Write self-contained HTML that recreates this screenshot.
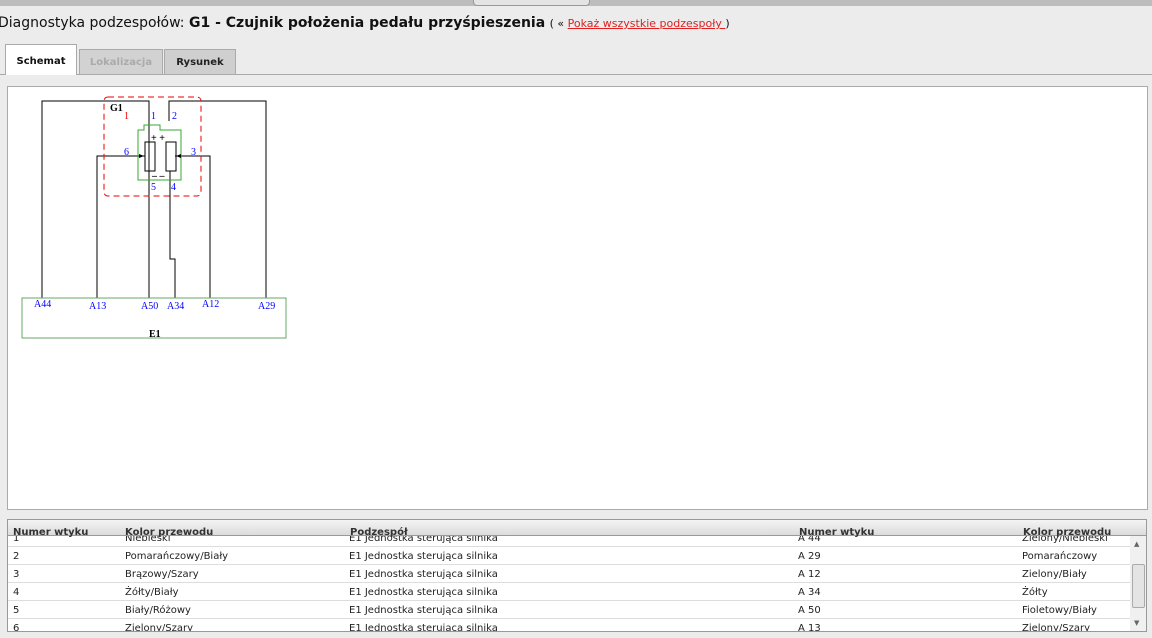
<!DOCTYPE html>
<html><head><meta charset="utf-8"><style>
body{margin:0;width:1152px;height:638px;background:#ececec;font-family:"DejaVu Sans","Liberation Sans",sans-serif;position:relative;overflow:hidden}
.top{position:absolute;left:0;top:0;width:1152px;height:6px;background:#bdbdbd}
.top .b{position:absolute;left:473px;top:-6px;width:115px;height:10px;border:1px solid #999;border-radius:4px;background:#e4e4e4}
h1{position:absolute;left:-2px;top:15px;margin:0;font-size:14px;font-weight:normal;color:#111;white-space:nowrap}
h1 b{font-weight:bold}
h1 .s{font-size:11px}
h1 a{color:#e02020;text-decoration:underline;font-size:11px}
.tab{position:absolute;top:49px;height:24px;line-height:25px;font-size:10px;font-weight:bold;text-align:center;border:1px solid #aaa;border-bottom:none}
.box{position:absolute;left:7px;top:86px;width:1139px;height:422px;background:#fff;border:1px solid #aaa}
.tbl{position:absolute;left:7px;top:519px;width:1138px;height:111px;border:1px solid #999;background:#fff;overflow:hidden;font-size:10px;color:#222}
.hd{position:absolute;left:0;top:0;width:1138px;height:15px;background:linear-gradient(#f4f4f4,#dcdcdc);border-bottom:1px solid #999;font-weight:bold;color:#333;z-index:2}
.hd span,.r span{position:absolute;white-space:nowrap}
.r{position:absolute;left:0;width:1122px;height:17px;border-bottom:1px solid #ddd}
.r span{top:4px}
.sb{position:absolute;right:0;top:16px;width:16px;height:95px;background:#f0f0f0}
.th{position:absolute;left:2px;top:28px;width:11px;height:42px;background:#e4e4e4;border:1px solid #aaa;border-radius:2px}
</style></head><body>
<div class="top"><div class="b"></div></div>
<h1>Diagnostyka podzespołów: <b>G1 - Czujnik położenia pedału przyśpieszenia</b> <span class="s">( « <a>Pokaż wszystkie podzespoły </a>)</span></h1>
<div class="tab" style="left:5px;width:70px;top:44px;height:30px;line-height:34px;background:#fff;color:#111;z-index:2">Schemat</div>
<div class="tab" style="left:79px;width:82px;background:#d2d2d2;color:#aaa">Lokalizacja</div>
<div class="tab" style="left:164px;width:70px;background:#cfcfcf;color:#222">Rysunek</div>
<div style="position:absolute;left:0;top:74px;width:1152px;height:1px;background:#aaa"></div>
<div class="box">
<svg width="1139" height="422" style="position:absolute;left:-8px;top:-87px" viewBox="0 0 1139 422">
<g fill="none" stroke="#000" stroke-width="1">
<path d="M42 298V101H149V298M169 121V101H266V298M97 298V156H145M210 298V156H175M170 171V259H175V298"/>
<rect x="145" y="142" width="10" height="29"/><rect x="166" y="142" width="10" height="29"/>
<rect x="104" y="97" width="97" height="99" rx="4" stroke="#e00" stroke-dasharray="6,4"/>
<path d="M138 130H144V125H160V130H181V180H138Z" stroke="#3a3"/>
<rect x="22" y="298" width="264" height="40" stroke="#6a6"/>
</g>
<path d="M139 154l5 2-5 2M181 154l-5 2 5 2" fill="#000"/>
<g font-family="Liberation Serif,serif" font-size="10" fill="#00f">
<text x="151" y="119">1</text><text x="172" y="119">2</text><text x="124" y="155">6</text><text x="191" y="155">3</text><text x="151" y="190">5</text><text x="171" y="190">4</text>
<text x="34" y="307">A44</text><text x="89" y="309">A13</text><text x="141" y="309">A50</text><text x="167" y="309">A34</text><text x="202" y="307">A12</text><text x="258" y="309">A29</text>
<text x="124" y="119" fill="#e00">1</text>
<text x="110" y="111" fill="#000" font-weight="bold">G1</text>
<text x="149" y="337" fill="#000" font-weight="bold">E1</text>
<text x="151" y="141" fill="#000" font-weight="bold">+ +</text>
<text x="152" y="179" fill="#000" font-weight="bold">– –</text>
</g>
</svg>
</div>
<div class="tbl">
<div class="hd"><span style="left:5px;top:7px">Numer wtyku</span><span style="left:117px;top:7px">Kolor przewodu</span><span style="left:342px;top:7px">Podzespół</span><span style="left:791px;top:7px">Numer wtyku</span><span style="left:1015px;top:7px">Kolor przewodu</span></div>
<div class="r" style="top:9px"><span style="left:5px">1</span><span style="left:117px">Niebieski</span><span style="left:341px">E1 Jednostka sterująca silnika</span><span style="left:790px">A 44</span><span style="left:1014px">Zielony/Niebieski</span></div>
<div class="r" style="top:27px"><span style="left:5px">2</span><span style="left:117px">Pomarańczowy/Biały</span><span style="left:341px">E1 Jednostka sterująca silnika</span><span style="left:790px">A 29</span><span style="left:1014px">Pomarańczowy</span></div>
<div class="r" style="top:45px"><span style="left:5px">3</span><span style="left:117px">Brązowy/Szary</span><span style="left:341px">E1 Jednostka sterująca silnika</span><span style="left:790px">A 12</span><span style="left:1014px">Zielony/Biały</span></div>
<div class="r" style="top:63px"><span style="left:5px">4</span><span style="left:117px">Żółty/Biały</span><span style="left:341px">E1 Jednostka sterująca silnika</span><span style="left:790px">A 34</span><span style="left:1014px">Żółty</span></div>
<div class="r" style="top:81px"><span style="left:5px">5</span><span style="left:117px">Biały/Różowy</span><span style="left:341px">E1 Jednostka sterująca silnika</span><span style="left:790px">A 50</span><span style="left:1014px">Fioletowy/Biały</span></div>
<div class="r" style="top:99px"><span style="left:5px">6</span><span style="left:117px">Zielony/Szary</span><span style="left:341px">E1 Jednostka sterująca silnika</span><span style="left:790px">A 13</span><span style="left:1014px">Zielony/Szary</span></div>
<div class="sb"><div class="th"></div><span style="position:absolute;left:4px;top:4px;font-size:7px;color:#666">▲</span><span style="position:absolute;left:4px;top:83px;font-size:7px;color:#666">▼</span></div>
</div>
</body></html>
